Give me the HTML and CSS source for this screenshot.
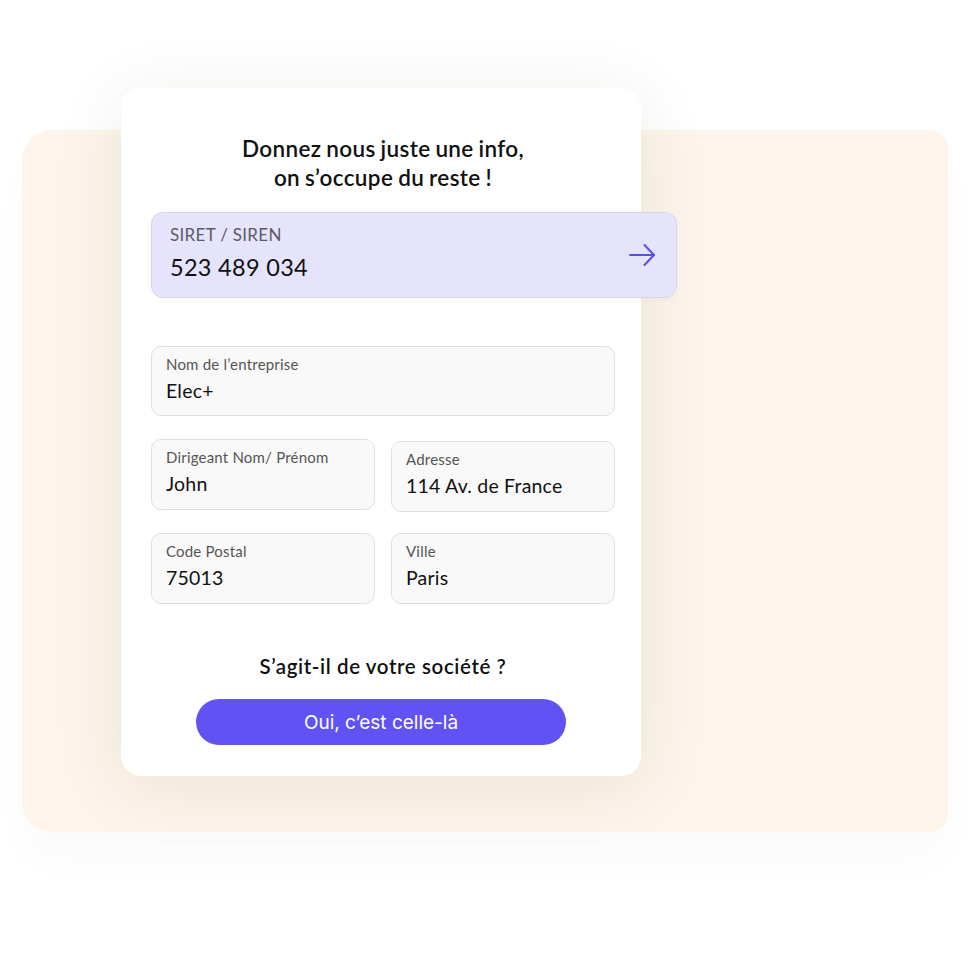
FILE: index.html
```html
<!DOCTYPE html>
<html lang="fr">
<head>
<meta charset="utf-8">
<title>Donnez nous juste une info</title>
<link rel="stylesheet" href="styles.css">
</head>
<body>
<div class="stage">
  <div class="backdrop"></div>
  <section class="card">
    <h1 class="title">Donnez nous juste une info,<br>on s’occupe du reste !</h1>
    <div class="siret">
      <div class="siret-text">
        <div class="siret-label">SIRET / SIREN</div>
        <div class="siret-value">523 489 034</div>
      </div>
      <svg class="arrow" width="28" height="24" viewBox="0 0 28 24" fill="none" stroke="currentColor" stroke-width="2" stroke-linecap="round" stroke-linejoin="round">
        <path d="M2 12H26"/>
        <path d="M16.5 2L26 12L16.5 22"/>
      </svg>
    </div>
    <div class="fields">
      <div class="field full">
        <div class="field-label">Nom de l’entreprise</div>
        <div class="field-value">Elec+</div>
      </div>
      <div class="field">
        <div class="field-label">Dirigeant Nom/ Prénom</div>
        <div class="field-value">John</div>
      </div>
      <div class="field shift">
        <div class="field-label">Adresse</div>
        <div class="field-value">114 Av. de France</div>
      </div>
      <div class="field">
        <div class="field-label">Code Postal</div>
        <div class="field-value">75013</div>
      </div>
      <div class="field">
        <div class="field-label">Ville</div>
        <div class="field-value">Paris</div>
      </div>
    </div>
    <p class="question">S’agit-il de votre société ?</p>
    <button class="confirm" type="button">Oui, c’est celle-là</button>
  </section>
</div>
</body>
</html>
```
FILE: styles.css
```css
* { box-sizing: border-box; }
html, body { margin: 0; padding: 0; background: #ffffff; }
body {
  font-family: "Lato", "Noto Sans", "Liberation Sans", sans-serif;
  color: #141414;
}
.stage {
  width: 980px;
  height: 980px;
  display: grid;
  grid-template-columns: 980px;
  grid-template-rows: 980px;
  overflow: hidden;
}
.backdrop {
  grid-area: 1 / 1;
  margin: 130px 0 0 22px;
  width: 926px;
  height: 702px;
  background: #fdf5eb;
  border-radius: 30px 18px 18px 30px;
  box-shadow: 0 30px 40px rgba(0, 0, 0, 0.02);
}
.card {
  grid-area: 1 / 1;
  margin: 88px 0 0 121px;
  width: 520px;
  height: 688px;
  background: #ffffff;
  border-radius: 20px;
  box-shadow: 0 10px 70px rgba(60, 40, 20, 0.09);
  padding: 46px 26px 0 30px;
  display: flex;
  flex-direction: column;
}
.title {
  margin: 0;
  font-size: 22.5px;
  line-height: 29px;
  font-weight: 600;
  text-align: center;
  color: #111;
  letter-spacing: 0.35px;
  word-spacing: -1px;
}
.siret {
  margin-top: 20px;
  width: 526px;
  height: 86px;
  background: #e6e3fc;
  border: 1.5px solid #d8d6e6;
  border-radius: 12px;
  padding: 11px 20px 0 18px;
  display: flex;
  align-items: center;
  justify-content: space-between;
  box-shadow: 0 2px 6px rgba(0,0,0,0.03);
}
.siret-text { align-self: flex-start; }
.siret-label {
  font-size: 17px;
  line-height: 22px;
  color: #5b5b63;
  letter-spacing: 0.3px;
}
.siret-value {
  margin-top: 6px;
  font-size: 23.5px;
  line-height: 30px;
  color: #111;
  letter-spacing: 0.3px;
}
.arrow {
  color: #5a4fe6;
  margin-top: -11px;
}
.fields {
  margin-top: 48px;
  display: grid;
  grid-template-columns: 224px 224px;
  column-gap: 16px;
  row-gap: 23px;
  width: 464px;
}
.field {
  height: 71px;
  background: #f9f9f9;
  border: 1.5px solid #e0e0e0;
  border-radius: 10px;
  padding: 8px 14px 0 14px;
}
.field.full { grid-column: 1 / -1; height: 70px; }
.field.shift { margin-top: 2px; margin-bottom: -2px; }
.field-label {
  font-size: 15px;
  line-height: 18px;
  color: #555;
  letter-spacing: 0.2px;
}
.field-value {
  margin-top: 6px;
  font-size: 19.5px;
  line-height: 24px;
  color: #111;
  letter-spacing: 0.2px;
}
.question {
  margin: 49px 0 0 0;
  font-size: 20.5px;
  line-height: 26px;
  font-weight: 600;
  text-align: center;
  color: #111;
  letter-spacing: 0.6px;
}
.confirm {
  margin: 20px auto 0 auto;
  width: 370px;
  height: 46px;
  border: none;
  border-radius: 23px;
  background: #6152f3;
  color: #fff;
  font-family: "Inter", "Roboto", sans-serif;
  font-size: 19px;
  font-weight: 400;
  padding: 0;
  position: relative;
  left: -2px;
}
```
